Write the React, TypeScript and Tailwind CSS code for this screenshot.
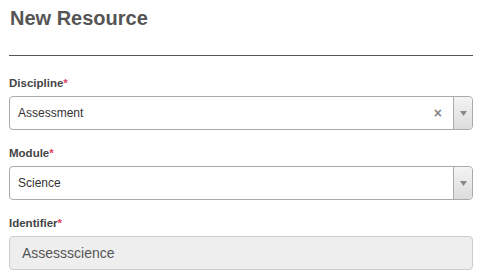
import React from "react";

const Arrow = () => (
  <div className="flex w-[19px] items-center justify-center self-stretch rounded-r-[4px] border-l border-[#aaa] bg-gradient-to-b from-[#f4f4f4] to-[#dcdcdc]">
    <svg width="7" height="5" viewBox="0 0 7 5">
      <path d="M0 0 L7 0 L3.5 5 Z" fill="#888" />
    </svg>
  </div>
);

const Label = ({ children }: { children: React.ReactNode }) => (
  <div className="mb-[4px] h-[17px] text-[11.5px] font-bold leading-[17px] text-[#444]">
    {children}
    <span className="text-[#e0415e]">*</span>
  </div>
);

export default function App() {
  return (
    <div className="ml-[9px] w-[464px] bg-white pt-[7px] font-['Liberation_Sans',Arial,sans-serif]">
      <h1 className="pl-[1px] text-[20px] font-bold leading-[22px] text-[#555]">New Resource</h1>
      <div className="mt-[26px] h-px bg-[#555]" />
      <div className="mt-[19px]">
        <div className="mb-[15px]">
          <Label>Discipline</Label>
          <div className="flex h-[34px] items-center rounded-[4px] border border-[#aaa] bg-white">
            <span className="flex-1 pl-[8px] text-[12px] text-[#333]">Assessment</span>
            <span className="mr-[11px] text-[14px] font-bold leading-none text-[#888]">×</span>
            <Arrow />
          </div>
        </div>
        <div className="mb-[15px]">
          <Label>Module</Label>
          <div className="flex h-[34px] items-center rounded-[4px] border border-[#aaa] bg-white">
            <span className="flex-1 pl-[8px] text-[12px] text-[#333]">Science</span>
            <Arrow />
          </div>
        </div>
        <div>
          <Label>Identifier</Label>
          <div className="flex h-[34px] items-center rounded-[4px] border border-[#ccc] bg-[#eee]">
            <span className="pl-[12px] text-[14px] text-[#555]">Assessscience</span>
          </div>
        </div>
      </div>
    </div>
  );
}
